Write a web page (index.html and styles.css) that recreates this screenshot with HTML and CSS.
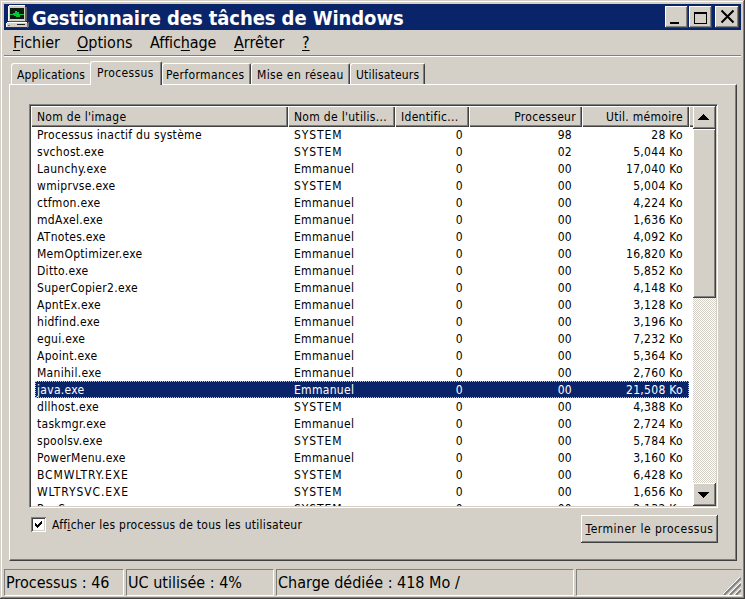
FILE: index.html
```html
<!DOCTYPE html>
<html lang="fr">
<head>
<meta charset="utf-8">
<title>Gestionnaire des tâches de Windows</title>
<link rel="stylesheet" href="styles.css">
</head>
<body>
<div class="window">
  <header class="titlebar">
    <svg class="app-icon" width="24" height="24" viewBox="0 0 24 24" shape-rendering="crispEdges">
      <path d="M19 2h2v14h-2z" fill="#606060"/>
      <path d="M2 1h17v15H2z" fill="#d4d0c8"/>
      <path d="M3 0h16v1H3v15H2V1h1z" fill="#fff"/>
      <path d="M4 3h14v11H4z" fill="#101c10"/>
      <path d="M4 9.500h3V8h1v2h1V6h1v5h1V7h1v4h1V9.500h5" fill="none" stroke="#00c838"/>
      <path d="M21 18l2-2v5l-2 2z" fill="#707070"/>
      <path d="M3 16h17v1H3z" fill="#505050"/>
      <path d="M0 18h21v4H0z" fill="#d4d0c8"/>
      <path d="M1 17h20v1H1v4H0v-4h1z" fill="#fff"/>
      <path d="M0 22h21v1H0z" fill="#303030"/>
      <path d="M2 20h2v1H2z" fill="#00c030"/>
      <path d="M11 19h8v1h-8z" fill="#202020"/>
    </svg>
    <h1 class="title">Gestionnaire des tâches de Windows</h1>
    <div class="controls">
      <button class="control" aria-label="Réduire"><svg width="23" height="22" shape-rendering="crispEdges"><path d="M5 16h9v2H5z"/></svg></button>
      <button class="control" aria-label="Agrandir"><svg width="23" height="22" shape-rendering="crispEdges"><path fill-rule="evenodd" d="M5 6h13v12H5zM6 8v9h11V8z"/></svg></button>
      <button class="control close" aria-label="Fermer"><svg width="24" height="22"><path d="M6.500 4.500l12 12M18.500 4.500l-12 12" stroke="#000" stroke-width="2" fill="none"/></svg></button>
    </div>
  </header>
  <nav class="menu">
    <span class="m1"><u>F</u>ichier</span><span class="m2"><u>O</u>ptions</span><span class="m3">Affic<u>h</u>age</span><span class="m4"><u>A</u>rrêter</span><span class="m5"><u>?</u></span>
  </nav>
  <div class="tabs">
    <div class="tab t1">Applications</div>
    <div class="tab t2 active">Processus</div>
    <div class="tab t3">Performances</div>
    <div class="tab t4">Mise en réseau</div>
    <div class="tab t5">Utilisateurs</div>
  </div>
  <main class="panel">
    <div class="list">
      <div class="table">
        <div class="row head">
          <div>Nom de l'image</div><div>Nom de l'utilis...</div><div>Identific...</div><div>Processeur</div><div>Util. mémoire</div><div></div>
        </div>
        <div id="rows"></div>
      </div>
      <div class="scrollbar">
        <div class="bevel arrow"><svg width="23" height="22" shape-rendering="crispEdges"><path d="M10 8h1v1h1v1h1v1h1v1h1v1h1v1H5v-1h1v-1h1v-1h1v-1h1V9h1z"/></svg></div>
        <div class="bevel thumb"></div>
        <div class="track"></div>
        <div class="bevel arrow"><svg width="23" height="22" shape-rendering="crispEdges"><path d="M5 9h11v1h-1v1h-1v1h-1v1h-1v1h-1v1h-1v-1H9v-1H8v-1H7v-1H6v-1H5z"/></svg></div>
      </div>
    </div>
    <div class="actions">
      <label class="check"><span class="box"><svg width="9" height="9" viewBox="0 0 9 9" shape-rendering="crispEdges"><path d="M1 3h1v1h1v1h1V4h1V3h1V2h1V1h1v3H7v1H6v1H5v1H4v1H3V7H2V6H1z"/></svg></span><span>Aff<u>i</u>cher les processus de tous les utilisateur</span></label>
      <button class="bevel end"><u>T</u>erminer le processus</button>
    </div>
  </main>
  <footer class="status">
    <div>Processus : 46</div><div>UC utilisée : 4%</div><div>Charge dédiée : 418 Mo /</div>
    <div class="last"><svg class="grip" width="18" height="18" viewBox="0 0 18 18"><path d="M1 18L18 1M7 18L18 7M13 18l5-5" stroke="#808080" stroke-width="2"/><path d="M-1 18L18-1M5 18L18 5M11 18l7-7" stroke="#fff"/></svg></div>
  </footer>
</div>
<script src="script.js"></script>
</body>
</html>
```
FILE: script.js
```js
const processes = [
  ["Processus inactif du système", "SYSTEM", "98", "28"],
  ["svchost.exe", "SYSTEM", "02", "5,044"],
  ["Launchy.exe", "Emmanuel", "00", "17,040"],
  ["wmiprvse.exe", "SYSTEM", "00", "5,004"],
  ["ctfmon.exe", "Emmanuel", "00", "4,224"],
  ["mdAxel.exe", "Emmanuel", "00", "1,636"],
  ["ATnotes.exe", "Emmanuel", "00", "4,092"],
  ["MemOptimizer.exe", "Emmanuel", "00", "16,820"],
  ["Ditto.exe", "Emmanuel", "00", "5,852"],
  ["SuperCopier2.exe", "Emmanuel", "00", "4,148"],
  ["ApntEx.exe", "Emmanuel", "00", "3,128"],
  ["hidfind.exe", "Emmanuel", "00", "3,196"],
  ["egui.exe", "Emmanuel", "00", "7,232"],
  ["Apoint.exe", "Emmanuel", "00", "5,364"],
  ["Manihil.exe", "Emmanuel", "00", "2,760"],
  ["java.exe", "Emmanuel", "00", "21,508"],
  ["dllhost.exe", "SYSTEM", "00", "4,388"],
  ["taskmgr.exe", "Emmanuel", "00", "2,724"],
  ["spoolsv.exe", "SYSTEM", "00", "5,784"],
  ["PowerMenu.exe", "Emmanuel", "00", "3,160"],
  ["BCMWLTRY.EXE", "SYSTEM", "00", "6,428"],
  ["WLTRYSVC.EXE", "SYSTEM", "00", "1,656"],
  ["RegSrvc.exe", "SYSTEM", "00", "2,132"]
];
const caps = text => text === text.toUpperCase() ? ' class="caps"' : "";
document.getElementById("rows").innerHTML = processes.map(([name, user, cpu, mem]) =>
  `<div class="row${name === "java.exe" ? " selected" : ""}"><div${caps(name)}>${name}</div><div${caps(user)}>${user}</div><div>0</div><div>${cpu}</div><div>${mem} Ko</div></div>`
).join("");
```
FILE: styles.css
```css
* { box-sizing: border-box; }
body { margin: 0; overflow: hidden; color: #000; font: 12px/17px "DejaVu Sans Condensed", "DejaVu Sans", sans-serif; font-stretch: condensed; white-space: nowrap; }
u { text-underline-offset: 1px; text-decoration-thickness: 1px; text-decoration-skip-ink: none; }
button { font: inherit; color: inherit; padding: 0; border: 0; }
svg { display: block; flex: none; }
.window { width: 745px; height: 599px; padding: 4px; display: flex; flex-direction: column; background: #d4d0c8; box-shadow: inset -1px -1px #404040, inset 1px 1px #d4d0c8, inset -2px -2px #808080, inset 2px 2px #fff; }
.titlebar { height: 26px; flex: none; display: flex; background: #0a246a; color: #fff; padding: 2px 2px 0 2px; }
.app-icon { margin-top: -1px; }
.title { margin: 0 0 0 2px; font-size: 20px; line-height: 24px; font-weight: bold; flex: 1; letter-spacing: -.08px; }
.controls { display: flex; gap: 1px; }
.control, .bevel { background: #d4d0c8; box-shadow: inset -1px -1px #404040, inset 1px 1px #fff, inset -2px -2px #808080; }
.control { width: 23px; height: 22px; }
.control.close { width: 24px; margin-left: 2px; }
.menu { height: 27px; flex: none; display: flex; padding-left: 9px; font-size: 16px; line-height: 25px; border-bottom: 1px solid #fff; box-shadow: inset 0 -1px #808080; }
.menu u { text-underline-offset: 2px; }
.m1, .m2 { width: 64px; }
.m2 { width: 73px; }
.m3 { width: 84px; letter-spacing: -.1px; }
.m4 { width: 68px; }
.tabs { height: 27px; flex: none; display: flex; align-items: flex-end; padding-left: 7px; }
.tab { height: 21px; line-height: 22px; padding-left: 5px; border: 1px solid #fff; border-right-color: #404040; border-bottom: 0; border-radius: 3px 2px 0 0; box-shadow: inset -1px 0 #808080; letter-spacing: .37px; }
.tab.active { height: 24px; line-height: 22px; padding-left: 6px; margin-bottom: -1px; background: #d4d0c8; position: relative; }
.tab.t1 { width: 79px; border-right: 0; box-shadow: none; letter-spacing: .17px; }
.t2 { width: 72px; }
.tab.t3 { width: 89px; padding-left: 3px; }
.t4 { width: 99px; }
.tab.t5 { width: 75px; letter-spacing: .17px; }
.panel { height: 477px; flex: none; margin: 0 4px 0 5px; padding: 20px 18px 0 20px; border: 1px solid #fff; border-right-color: #404040; border-bottom-color: #404040; box-shadow: inset -1px -1px #808080; }
.list { width: 689px; height: 404px; display: flex; margin-left: -1px; margin-top: -1px; background: #fff; border: 1px solid; border-color: #808080 #fff #fff #808080; padding: 1px; box-shadow: inset 1px 1px #404040, inset -1px -1px #d4d0c8; overflow: hidden; }
.table { width: 662px; height: 400px; overflow: hidden; flex: none; }
.row { display: grid; grid-template-columns: 257px 107px 74px 113px 107px 1fr; height: 17px; line-height: 19px; letter-spacing: .3px; }
.row > div { padding: 0 6px; }
.row > .caps { letter-spacing: .9px; }
.row > div:nth-child(n+4), #rows .row > div:nth-child(3) { text-align: right; }
#rows .row > div:nth-child(4) { padding-right: 10px; }
.row.head { height: 20px; background: #d4d0c8; }
.head > div { border-top: 1px solid #fff; border-left: 1px solid #fff; box-shadow: inset -1px -1px #404040, inset -2px -2px #808080; line-height: 20px; padding: 0 6px 0 5px; }
.row.selected { width: 654px; margin-left: 4px; grid-template-columns: 253px 107px 74px 113px 107px; background: #0a246a; color: #fff; outline: 1px dotted #d8c878; outline-offset: -1px; }
.row.selected > div:first-child { padding-left: 2px; }
.scrollbar { width: 23px; height: 400px; display: flex; flex-direction: column; }
.arrow { height: 23px; }
.thumb { height: 169px; }
.track { flex: 1; background: repeating-conic-gradient(#d4d0c8 0 25%, #fff 0 50%) 0 0 / 2px 2px; }
.actions { display: flex; justify-content: space-between; padding-top: 7px; margin-left: 1px; }
.check { display: flex; align-items: flex-start; gap: 6px; margin-top: 2px; letter-spacing: .27px; }
.box { width: 15px; height: 15px; padding: 3px; background: #fff; box-shadow: inset 1px 1px #808080, inset -1px -1px #fff, inset 2px 2px #404040, inset -2px -2px #d4d0c8; }
.end { width: 137px; height: 28px; line-height: 28px; text-align: center; letter-spacing: .5px; }
.status { flex: none; margin-top: 8px; height: 26px; display: grid; grid-template-columns: 120px 148px 298px 166px; justify-content: start; column-gap: 2px; font-size: 16px; line-height: 25px; }
.status > div { padding-left: 1px; border: 1px solid; border-color: #808080 #fff #fff #808080; }
.status .last { padding: 0; display: flex; justify-content: flex-end; align-items: flex-end; border-right-color: #d4d0c8; }
```
